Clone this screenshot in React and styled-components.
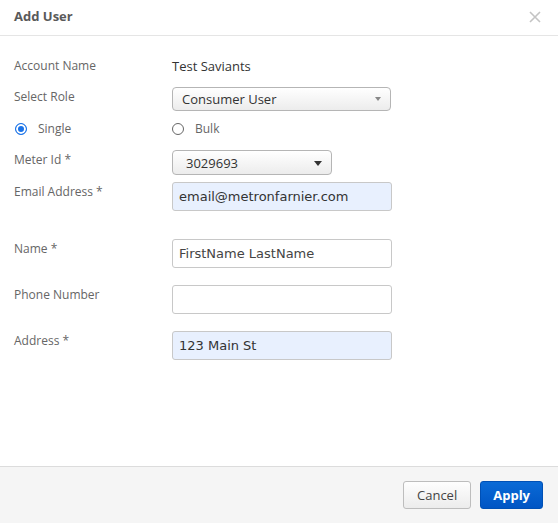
import styled, { createGlobalStyle } from "styled-components";

const GlobalStyle = createGlobalStyle`
  html, body {
    margin: 0;
    padding: 0;
    background: #fff;
  }
  body {
    font-family: "Open Sans", "Liberation Sans", sans-serif;
  }
`;

const Dialog = styled.div`
  width: 558px;
  height: 523px;
  display: flex;
  flex-direction: column;
  background: #fff;
  box-sizing: border-box;
`;

const Header = styled.div`
  height: 35px;
  display: flex;
  align-items: center;
  justify-content: space-between;
  padding: 0 14px 0 14px;
  border-bottom: 1px solid #e5e5e5;
`;

const Title = styled.div`
  font-size: 13px;
  font-weight: 700;
  color: #5a5a5a;
  margin-top: -3px;
`;

const Close = styled.button`
  border: none;
  background: none;
  padding: 0;
  width: 14px;
  height: 14px;
  margin-right: 2px;
  margin-top: -2px;
  display: flex;
  cursor: pointer;
`;

const Body = styled.div`
  flex: 1;
  padding: 20px 14px 0 14px;
`;

const Row = styled.div`
  display: grid;
  grid-template-columns: 158px 1fr;
  align-items: start;
  margin-top: ${(p) => p.$gap || 0}px;
`;

const Label = styled.div`
  font-size: 12px;
  color: #666;
  line-height: 20px;
  padding-top: ${(p) => p.$pad || 0}px;
`;

const Value = styled.div`
  font-size: 13px;
  color: #333;
  line-height: 20px;
`;

const Select = styled.div`
  position: relative;
  width: ${(p) => p.$width}px;
  height: ${(p) => p.$height}px;
  box-sizing: border-box;
  border: 1px solid #b5b5b5;
  border-radius: 4px;
  background: linear-gradient(#ffffff, #ececec);
  display: flex;
  align-items: center;
  padding-left: ${(p) => p.$pad}px;
  font-size: 13px;
  color: #333;
`;

const Arrow = styled.span`
  position: absolute;
  right: ${(p) => p.$right}px;
  top: 50%;
  margin-top: -2px;
  width: 0;
  height: 0;
  border-left: ${(p) => p.$size}px solid transparent;
  border-right: ${(p) => p.$size}px solid transparent;
  border-top: ${(p) => p.$size + 1}px solid ${(p) => p.$color};
`;

const RadioRow = styled.div`
  display: grid;
  grid-template-columns: 158px 1fr;
  margin-top: 9px;
  height: 16px;
  align-items: center;
`;

const RadioLabel = styled.label`
  display: flex;
  align-items: center;
  gap: 11px;
  font-size: 12px;
  color: #666;
  padding-left: ${(p) => p.$indent || 0}px;
`;

const RadioDot = styled.span`
  width: 12px;
  height: 12px;
  box-sizing: border-box;
  border-radius: 50%;
  border: 1px solid ${(p) => (p.$checked ? "#1a73e8" : "#666")};
  background: ${(p) => (p.$checked ? "#1a73e8" : "#fff")};
  box-shadow: ${(p) => (p.$checked ? "inset 0 0 0 2px #fff" : "none")};
`;

const Input = styled.input`
  width: 220px;
  height: 29px;
  box-sizing: border-box;
  border: 1px solid #c8c8c8;
  border-radius: 3px;
  padding: 0 6px;
  font-family: "DejaVu Sans", Verdana, sans-serif;
  font-size: 13px;
  color: #333;
  background: ${(p) => (p.$filled ? "#e8f0fe" : "#fff")};
  outline: none;
  &::placeholder {
    color: #444;
  }
`;

const Footer = styled.div`
  height: 56px;
  border-top: 1px solid #dcdcdc;
  background: #f5f5f5;
  display: flex;
  align-items: center;
  justify-content: flex-end;
  gap: 9px;
  padding: 0 15px;
`;

const Button = styled.button`
  height: 28px;
  padding: 0 ${(p) => (p.$primary ? 12 : 13)}px;
  border-radius: 3px;
  font-family: "Open Sans", sans-serif;
  font-size: 13px;
  font-weight: ${(p) => (p.$primary ? 700 : 400)};
  color: ${(p) => (p.$primary ? "#fff" : "#444")};
  border: 1px solid ${(p) => (p.$primary ? "#0050b5" : "#bdbdbd")};
  background: ${(p) =>
    p.$primary
      ? "linear-gradient(#0a6ad6, #0055c4)"
      : "linear-gradient(#fefefe, #ececec)"};
  cursor: pointer;
`;

const App = () => {
  return (
    <Dialog>
      <GlobalStyle />
      <Header>
        <Title>Add User</Title>
        <Close aria-label="Close">
          <svg width="14" height="14" viewBox="0 0 14 14">
            <path d="M2 2 L12 12 M12 2 L2 12" stroke="#c4c4c4" strokeWidth="1.6" />
          </svg>
        </Close>
      </Header>
      <Body>
        <Row>
          <Label>Account Name</Label>
          <Value>Test Saviants</Value>
        </Row>
        <Row $gap={11}>
          <Label $pad={0}>Select Role</Label>
          <Select $width={219} $height={24} $pad={9}>
            Consumer User
            <Arrow $right={9} $size={3} $color="#888" />
          </Select>
        </Row>
        <RadioRow>
          <RadioLabel $indent={1}>
            <RadioDot $checked />
            Single
          </RadioLabel>
          <RadioLabel>
            <RadioDot />
            Bulk
          </RadioLabel>
        </RadioRow>
        <Row $gap={14}>
          <Label $pad={-2}>Meter Id *</Label>
          <Select $width={160} $height={25} $pad={13}>
            3029693
            <Arrow $right={9} $size={4} $color="#333" />
          </Select>
        </Row>
        <Row $gap={7}>
          <Label>Email Address *</Label>
          <Input $filled defaultValue="email@metronfarnier.com" />
        </Row>
        <Row $gap={28}>
          <Label>Name *</Label>
          <Input placeholder="FirstName LastName" />
        </Row>
        <Row $gap={17}>
          <Label>Phone Number</Label>
          <Input />
        </Row>
        <Row $gap={17}>
          <Label>Address *</Label>
          <Input $filled defaultValue="123 Main St" />
        </Row>
      </Body>
      <Footer>
        <Button>Cancel</Button>
        <Button $primary>Apply</Button>
      </Footer>
    </Dialog>
  );
};

export default App;
